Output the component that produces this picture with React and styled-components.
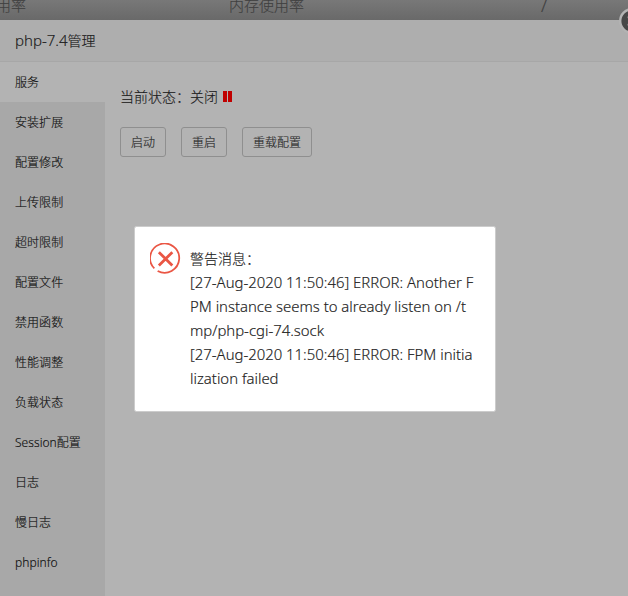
import React from "react"
import styled, { createGlobalStyle } from "styled-components"

const menu = [
  "服务",
  "安装扩展",
  "配置修改",
  "上传限制",
  "超时限制",
  "配置文件",
  "禁用函数",
  "性能调整",
  "负载状态",
  "Session配置",
  "日志",
  "慢日志",
  "phpinfo",
]

const message = [
  "[27-Aug-2020 11:50:46] ERROR: Another F",
  "PM instance seems to already listen on /t",
  "mp/php-cgi-74.sock",
  "[27-Aug-2020 11:50:46] ERROR: FPM initia",
  "lization failed",
]

const App = () => {
  return (
    <>
      <GlobalStyle />
      <Page>
        <Backdrop>
          <BackdropLabel $left={-19}>使用率</BackdropLabel>
          <BackdropLabel $left={229}>内存使用率</BackdropLabel>
          <BackdropLabel $left={541} $large>
            /
          </BackdropLabel>
        </Backdrop>
        <Panel>
          <CloseButton>
            <svg width="26" height="26" viewBox="0 0 26 26">
              <circle cx="13" cy="13" r="11.8" fill="#474747" stroke="#b3b3b3" strokeWidth="2.4" />
              <path d="M8.5 8.5l9 9M17.5 8.5l-9 9" stroke="#777" strokeWidth="2" />
            </svg>
          </CloseButton>
          <PanelTitle>
            <Latin>php-7.4</Latin>管理
          </PanelTitle>
          <PanelBody>
            <Sidebar>
              {menu.map((item, i) => (
                <MenuItem key={item} $active={i === 0}>
                  {item}
                </MenuItem>
              ))}
            </Sidebar>
            <Content>
              <Status>
                当前状态：关闭
                <PauseIcon />
              </Status>
              <Buttons>
                <Button>启动</Button>
                <Button>重启</Button>
                <Button>重载配置</Button>
              </Buttons>
            </Content>
          </PanelBody>
        </Panel>
        <Dialog>
          <ErrorIcon width="31" height="31" viewBox="0 0 30 30">
            <path d="M4.2 24.6A14.1 14.1 0 1 1 7.4 27" stroke="#ea5644" strokeWidth="1.7" />
            <path d="M8.6 8.9L21.6 21.7M21.6 8.9L8.6 21.7" stroke="#ea5644" strokeWidth="2.7" />
          </ErrorIcon>
          <Message>
            <MessageTitle>警告消息：</MessageTitle>
            {message.map((line, i) => (
              <p key={i}>{line}</p>
            ))}
          </Message>
        </Dialog>
      </Page>
    </>
  )
}

const GlobalStyle = createGlobalStyle`
  * {
    box-sizing: border-box;
  }
  body {
    margin: 0;
    font-family: "Noto Sans", "Noto Sans CJK SC", sans-serif;
    font-weight: 300;
    -webkit-text-stroke: 0.15px;
  }
  p {
    margin: 0;
  }
`

const Page = styled.div`
  position: relative;
  width: 628px;
  height: 596px;
  display: flex;
  flex-direction: column;
  overflow: hidden;
  background: #b3b3b3;
`

const Backdrop = styled.div`
  position: relative;
  flex: none;
  height: 20px;
  overflow: hidden;
  background: linear-gradient(#787878, #696969);
`

const BackdropLabel = styled.span`
  position: absolute;
  top: -7px;
  left: ${({ $left }) => $left}px;
  font-size: ${({ $large }) => ($large ? 18 : 15)}px;
  line-height: 24px;
  color: #404040;
`

const Panel = styled.div`
  position: relative;
  flex: 1;
  display: flex;
  flex-direction: column;
`

const CloseButton = styled.div`
  position: absolute;
  top: -12px;
  left: 619px;
  width: 26px;
  height: 26px;
  svg {
    display: block;
  }
`

const Latin = styled.span`
  font-size: 15px;
`

const PanelTitle = styled.div`
  height: 42px;
  padding-left: 15px;
  border-bottom: 1px solid #a7a7a7;
  background: #aeaeae;
  color: #1c1c1c;
  font-size: 14px;
  line-height: 40px;
`

const PanelBody = styled.div`
  flex: 1;
  display: flex;
`

const Sidebar = styled.div`
  width: 105px;
  background: #a8a8a8;
`

const MenuItem = styled.div`
  height: 40px;
  padding-left: 15px;
  background: ${({ $active }) => ($active ? "#b3b3b3" : "transparent")};
  color: #111;
  font-size: 12px;
  letter-spacing: 0.05px;
  line-height: 42px;
  white-space: nowrap;
`

const Content = styled.div`
  padding: 20px 15px;
`

const Status = styled.div`
  display: flex;
  align-items: center;
  height: 30px;
  padding-bottom: 2px;
  color: #1c1c1c;
  font-size: 14px;
`

const PauseIcon = styled.span`
  width: 9px;
  height: 11px;
  margin-left: 5px;
  border: solid #c00000;
  border-width: 0 4px;
`

const Buttons = styled.div`
  display: flex;
  gap: 15px;
  margin-top: 15px;
`

const Button = styled.div`
  height: 30px;
  padding: 0 10px;
  border: 1px solid #8f8f8f;
  border-radius: 3px;
  color: #282828;
  font-size: 12px;
  line-height: 29px;
`

const Dialog = styled.div`
  position: absolute;
  top: 226px;
  left: 134px;
  width: 362px;
  height: 186px;
  display: flex;
  padding: 16px 15px;
  border: 1px solid #ccc;
  border-radius: 2px;
  background: #fff;
  background-clip: padding-box;
`

const ErrorIcon = styled.svg`
  flex: none;
  fill: none;
`

const Message = styled.div`
  margin: 3px 0 0 9px;
  color: #222;
  font-size: 14.9px;
  line-height: 24px;
  white-space: nowrap;
`

const MessageTitle = styled.p`
  padding-top: 1px;
  margin-bottom: -1px;
  font-size: 14px;
`

export default App
